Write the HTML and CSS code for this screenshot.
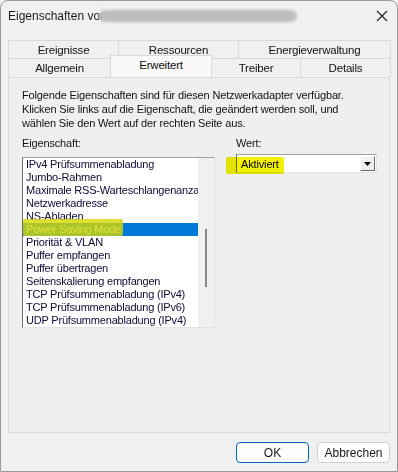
FILE: index.html
```html
<!DOCTYPE html>
<html lang="de">

<head>
  <meta charset="UTF-8" />
  <title>Eigenschaften</title>
  <link rel="stylesheet" href="styles.css">
</head>

<body>
  <div id="dialog">
    <div class="titlebar">
      <span class="title">Eigenschaften von</span>
      <span class="blurred"></span>
      <svg class="close" width="12" height="12" viewBox="0 0 12 12">
        <path d="M1 1 L11 11 M11 1 L1 11" stroke="#1c1c1c" stroke-width="1.1" fill="none" />
      </svg>
    </div>

    <div class="tabs">
      <div class="tabrow back">
        <div class="tab w110">Ereignisse</div>
        <div class="tab w120">Ressourcen</div>
        <div class="tab grow">Energieverwaltung</div>
      </div>
      <div class="tabrow front">
        <div class="tab w102">Allgemein</div>
        <div class="tab w101 selected">Erweitert</div>
        <div class="tab w89">Treiber</div>
        <div class="tab grow">Details</div>
      </div>
    </div>

    <div class="panel">
      <p class="intro">Folgende Eigenschaften sind für diesen Netzwerkadapter verfügbar.<br>
        Klicken Sie links auf die Eigenschaft, die geändert werden soll, und<br>
        wählen Sie den Wert auf der rechten Seite aus.</p>

      <div class="columns">
        <div class="col left">
          <label>Eigenschaft:</label>
          <div class="listbox">
            <ul class="items">
              <li>IPv4 Prüfsummenabladung</li>
              <li>Jumbo-Rahmen</li>
              <li>Maximale RSS-Warteschlangenanzahl</li>
              <li>Netzwerkadresse</li>
              <li>NS-Abladen</li>
              <li class="sel">Power Saving Mode</li>
              <li>Priorität &amp; VLAN</li>
              <li>Puffer empfangen</li>
              <li>Puffer übertragen</li>
              <li>Seitenskalierung empfangen</li>
              <li>TCP Prüfsummenabladung (IPv4)</li>
              <li>TCP Prüfsummenabladung (IPv6)</li>
              <li>UDP Prüfsummenabladung (IPv4)</li>
            </ul>
            <div class="scroll"><div class="thumb"></div></div>
          </div>
          <span class="marker marker-list"></span>
        </div>

        <div class="col right">
          <label>Wert:</label>
          <div class="combo">
            <span class="value">Aktiviert</span>
            <span class="dropbtn">
              <svg width="7" height="4" viewBox="0 0 7 4"><path d="M0 0 H7 L3.5 4 Z" fill="#000" /></svg>
            </span>
          </div>
          <span class="marker marker-combo"></span>
        </div>
      </div>
    </div>

    <div class="buttons">
      <button class="btn default">OK</button>
      <button class="btn">Abbrechen</button>
    </div>
  </div>
</body>

</html>
```

FILE: styles.css
```css
html,
body {
  margin: 0;
  background-color: #f0f0f0;
}

#dialog {
  width: 398px;
  height: 472px;
  box-sizing: border-box;
  border: 1px solid #9a9a9a;
  border-radius: 8px 8px 0 0;
  background-color: #f0f0f0;
  font-family: "Liberation Sans", Arial, sans-serif;
  font-size: 11px;
  letter-spacing: -0.15px;
  color: #000;
  display: flex;
  flex-direction: column;
  overflow: hidden;
}

.titlebar {
  height: 29px;
  display: flex;
  align-items: center;
  padding-left: 7px;
  position: relative;
}

.title {
  color: #1a1a1a;
  font-size: 12px;
  letter-spacing: 0;
}

.blurred {
  position: absolute;
  left: 98px;
  top: 9px;
  width: 198px;
  height: 12px;
  border-radius: 6px;
  background-color: #bdbdbd;
  filter: blur(1.5px);
}

.close {
  margin-left: auto;
  margin-right: 9px;
}

/* two rows of property sheet tabs */
.tabs {
  margin: 10px 7px 0 7px;
  display: flex;
  flex-direction: column;
}

.tabrow {
  display: flex;
  position: relative;
}

.tab {
  box-sizing: border-box;
  border: 1px solid #d9d9d9;
  border-bottom: none;
  margin-right: -1px;
  text-align: center;
  color: #111;
  background-color: #f0f0f0;
  font-size: 11.5px;
  letter-spacing: -0.2px;
}

.back .tab {
  height: 18px;
  line-height: 19px;
}

.front .tab {
  height: 19px;
  line-height: 19px;
}

.tab.selected {
  background-color: #f9f9f9;
  height: 22px;
  margin-top: -3px;
  line-height: 18px;
  z-index: 1;
  border-color: #d9d9d9;
}

.w110 { width: 111px; }
.w120 { width: 121px; }
.w102 { width: 103px; }
.w101 { width: 102px; }
.w89 { width: 90px; }
.grow { flex: 1; }

.panel {
  margin: 0 7px 0 7px;
  height: 356px;
  box-sizing: border-box;
  border: 1px solid #d9d9d9;
  background-color: #efefef;
  padding: 10px 12px 0 13px;
}

.intro {
  margin: 0;
  line-height: 14px;
  white-space: nowrap;
  color: #111;
}

.columns {
  display: flex;
  margin-top: 6px;
}

.col {
  display: flex;
  flex-direction: column;
  position: relative;
}

.col label {
  line-height: 14px;
  height: 14px;
  color: #111;
}

.col.left {
  width: 193px;
}

.col.right {
  margin-left: 21px;
  width: 148px;
}

.listbox {
  margin-top: 7px;
  width: 193px;
  height: 171px;
  box-sizing: border-box;
  border-top: 1px solid #a0a0a0;
  border-left: 1px solid #6d6d6d;
  border-right: 1px solid #e3e3e3;
  border-bottom: 1px solid #e3e3e3;
  background-color: #fff;
  display: flex;
  overflow: hidden;
}

.items {
  list-style: none;
  margin: 0;
  padding: 0;
  width: 175px;
  overflow: hidden;
}

.items li {
  height: 13px;
  line-height: 13px;
  padding-left: 3px;
  white-space: nowrap;
  color: #0b0b3c;
  letter-spacing: -0.2px;
}

.items li.sel {
  background-color: #0078d7;
  color: #fff;
}

.scroll {
  flex: 1;
  background-color: #f0f0f0;
  position: relative;
}

.thumb {
  position: absolute;
  left: 7px;
  top: 71px;
  width: 2px;
  height: 58px;
  background-color: #888;
}

.combo {
  margin-top: 4px;
  height: 19px;
  box-sizing: border-box;
  border-top: 1px solid #a0a0a0;
  border-left: 1px solid #6d6d6d;
  border-right: 1px solid #e3e3e3;
  border-bottom: 1px solid #e3e3e3;
  background-color: #fff;
  display: flex;
  align-items: center;
  padding: 1px;
}

.value {
  flex: 1;
  padding-left: 3px;
}

.dropbtn {
  width: 15px;
  height: 15px;
  box-sizing: border-box;
  border: 1px solid;
  border-color: #fff #696969 #696969 #fff;
  background-color: #f0f0f0;
  display: flex;
  align-items: center;
  justify-content: center;
}

/* yellow marker strokes drawn over the screenshot */
.marker {
  position: absolute;
  border-radius: 2px;
}

.marker-list {
  left: 1px;
  top: 83px;
  width: 100px;
  height: 17px;
  background-color: rgba(215, 215, 0, 0.8);
}

.marker-combo {
  left: -10px;
  top: 21px;
  width: 58px;
  height: 17px;
  background-color: #f2f200;
  mix-blend-mode: multiply;
}

.buttons {
  display: flex;
  justify-content: flex-end;
  gap: 8px;
  padding: 9px 7px 0 0;
}

.btn {
  font-family: "Liberation Sans", Arial, sans-serif;
  font-size: 12px;
  height: 21px;
  width: 73px;
  padding: 0;
  border: 1px solid #d0d0d0;
  border-radius: 4px;
  background-color: #fdfdfd;
  color: #1a1a1a;
}

.btn.default {
  border-color: #0067c0;
}
```
